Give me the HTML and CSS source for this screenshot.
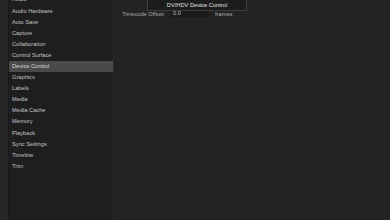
FILE: index.html
```html
<!doctype html>
<html lang="en">
	<head>
		<meta charset="UTF-8" />
		<title>Preferences</title>
		<link rel="stylesheet" href="styles.css">
	</head>
	<body>
		<section id="wrap">
			<div class="gutter"></div>
			<ul class="cats">
				<li>Audio</li>
				<li>Audio Hardware</li>
				<li>Auto Save</li>
				<li>Capture</li>
				<li>Collaboration</li>
				<li>Control Surface</li>
				<li class="active">Device Control</li>
				<li>Graphics</li>
				<li>Labels</li>
				<li>Media</li>
				<li>Media Cache</li>
				<li>Memory</li>
				<li>Playback</li>
				<li>Sync Settings</li>
				<li>Timeline</li>
				<li>Trim</li>
			</ul>
			<div class="panel">
				<div class="popup">DV/HDV Device Control</div>
				<div class="row">
					<span class="label">Timecode Offset:</span>
					<span class="field">0.0</span>
					<span class="unit">frames</span>
				</div>
			</div>
		</section>
	</body>
</html>
```

FILE: styles.css
```css
*{
	margin: 0;
	padding: 0;
}
body{
	background: #232323;
	font-family: "Liberation Sans", Arial, sans-serif;
	font-size: 5.7px;
	color: #c4c4c4;
}
#wrap{
	display: flex;
	width: 390px;
	height: 220px;
	overflow: hidden;
}
.gutter{
	width: 8px;
	background: #262626;
	border-right: 1px solid #191919;
}
.cats{
	width: 104px;
	background: #1e1e1e;
	border-right: 1px solid #2a2a2a;
	list-style: none;
	margin-top: -5.6px;
}
.cats li{
	height: 11.1px;
	line-height: 11.1px;
	padding-left: 3px;
	white-space: nowrap;
}
.cats li.active{
	background: #4a4a4a;
	color: #dcdcdc;
}
.panel{
	flex: 1;
	position: relative;
	padding: 10px 0 0 8px;
}
.popup{
	position: absolute;
	left: 33px;
	top: -4px;
	width: 98px;
	height: 13px;
	line-height: 17px;
	text-align: center;
	background: #1c1c1c;
	border: 1px solid #3c3c3c;
	color: #e0e0e0;
}
.row{
	display: flex;
	align-items: center;
	height: 7px;
	color: #a8a8a8;
}
.field{
	width: 36px;
	height: 7px;
	line-height: 7px;
	margin-left: 5px;
	padding-left: 3px;
	background: #1a1a1a;
	color: #bdbdbd;
}
.unit{
	margin-left: 6px;
}
```
